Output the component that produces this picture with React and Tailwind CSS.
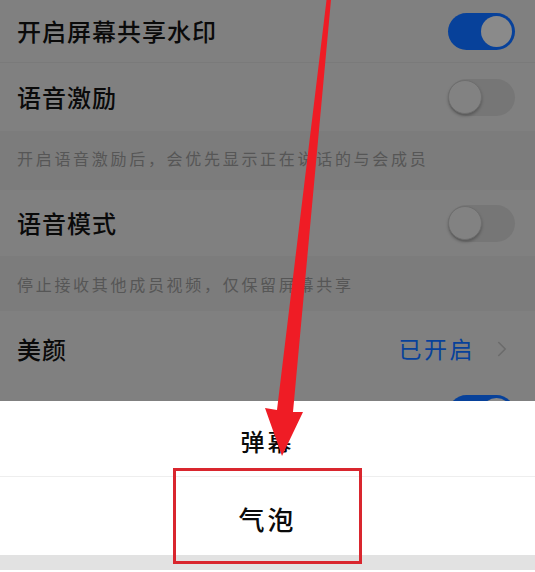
import React from "react";
import { ChevronRight } from "lucide-react";

const font = "font-['Noto_Sans_CJK_SC','Liberation_Sans',sans-serif]";

const Toggle = ({ on }) =>
  on ? (
    <div className="flex h-[37px] w-[67px] items-center justify-end rounded-full bg-[#07419a] pr-[3px]">
      <div className="h-[31px] w-[31px] rounded-full bg-[#8a8a8a]" />
    </div>
  ) : (
    <div className="flex h-[37px] w-[67px] items-center rounded-full bg-[#767676]">
      <div className="h-[34px] w-[34px] rounded-full border border-[#6e6e6e] bg-[#828282] shadow-[0_2px_3px_rgba(0,0,0,0.25)]" />
    </div>
  );

const Row = ({ label, height, children }) => (
  <div className={`flex items-center justify-between pl-[17px] pr-[20px] ${height}`}>
    <span className="text-[24px] leading-none font-medium tracking-[1px] text-[#0a0a0a]">
      {label}
    </span>
    {children}
  </div>
);

const Hint = ({ children, height }) => (
  <div className={`flex items-center bg-[#7c7c7c] pl-[17px] text-[16px] leading-none tracking-[2.7px] text-[#565656] ${height}`}>
    {children}
  </div>
);

export default function App() {
  return (
    <div className={`relative h-[572px] w-[535px] overflow-hidden bg-white ${font}`}>
      {/* Dimmed settings list */}
      <div className="h-[401px] overflow-hidden bg-[#808080]">
        <div className="border-b border-[#7a7a7a]">
          <Row label="开启屏幕共享水印" height="h-[62px]">
            <Toggle on />
          </Row>
        </div>
        <Row label="语音激励" height="h-[68px]">
          <Toggle />
        </Row>
        <Hint height="h-[59px] pb-[6px]">开启语音激励后，会优先显示正在说话的与会成员</Hint>
        <Row label="语音模式" height="h-[66px]">
          <Toggle />
        </Row>
        <Hint height="h-[55px]">停止接收其他成员视频，仅保留屏幕共享</Hint>
        <Row label="美颜" height="h-[75px]">
          <div className="flex items-center gap-[14px] pr-[-4px]">
            <span className="text-[23px] leading-none tracking-[2.5px] text-[#07419a]">已开启</span>
            <ChevronRight className="h-[26px] w-[26px] text-[#6b6b6b]" strokeWidth={1.5} />
          </div>
        </Row>
        <div className="flex justify-end pt-[9px] pr-[20px]">
          <Toggle on />
        </div>
      </div>

      {/* Bottom sheet */}
      <div className="flex h-[76px] items-center justify-center border-b border-[#eeeeee] pt-[5px] text-[24px] leading-none font-medium tracking-[3px] text-[#0a0a0a]">
        弹幕
      </div>
      <div className="flex h-[78px] items-center justify-center pt-[5px] text-[26px] leading-none font-medium tracking-[3px] text-[#0a0a0a]">
        气泡
      </div>
      <div className="h-[15px] bg-[#e2e2e2]" />

      {/* Red annotation box */}
      <div className="absolute top-[468px] left-[173px] h-[96px] w-[189px] border-[3px] border-[#d9262e]" />

      {/* Red annotation arrow */}
      <svg className="absolute top-0 left-0" width="535" height="572" viewBox="0 0 535 572">
        <path
          d="M326.500 0 L331 0 L293 412 L303 412 L282 456 L265 408 L277 410 Z"
          fill="#ef1c25"
        />
      </svg>
    </div>
  );
}
